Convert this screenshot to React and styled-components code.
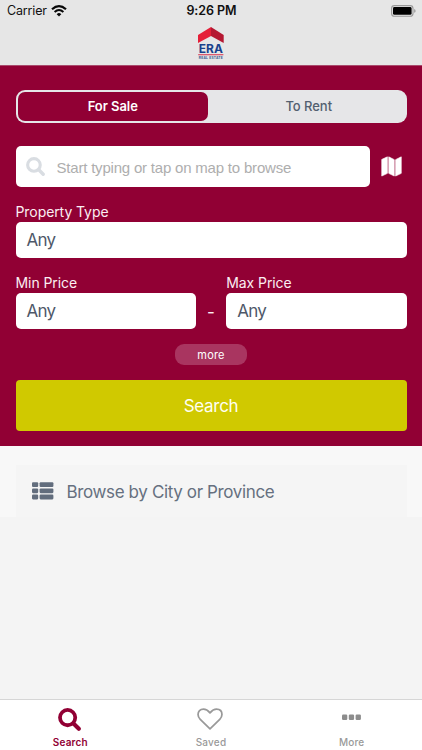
import { useState } from "react";
import styled, { createGlobalStyle } from "styled-components";

const GlobalStyle = createGlobalStyle`
  * {
    box-sizing: border-box;
  }
  body {
    margin: 0;
    font-family: Inter, "Liberation Sans", sans-serif;
  }
  button, input {
    font-family: inherit;
    border: 0;
    padding: 0;
    margin: 0;
  }
`;

const Screen = styled.div`
  display: flex;
  flex-direction: column;
  width: 422px;
  height: 750px;
  overflow: hidden;
  background: #f4f4f4;
`;

const Header = styled.header`
  height: 65px;
  flex: none;
  background: #e6e6e6;
  box-shadow: 0 1px 0 #a94a6c;
  z-index: 1;
`;

const StatusBar = styled.div`
  display: grid;
  grid-template-columns: 1fr auto 1fr;
  align-items: center;
  height: 22px;
  padding: 0 6px 0 7px;
  color: #111;
`;

const Carrier = styled.div`
  display: flex;
  align-items: center;
  gap: 4px;
  font-size: 12.5px;
  line-height: 22px;
  letter-spacing: -0.15px;
`;

const Clock = styled.div`
  font-size: 12.5px;
  font-weight: 600;
  line-height: 22px;
  letter-spacing: -0.05px;
`;

const Battery = styled.svg`
  justify-self: end;
`;

const LogoRow = styled.div`
  display: flex;
  justify-content: center;
  padding-top: 4px;
`;

const SearchPanel = styled.section`
  display: flex;
  flex-direction: column;
  flex: none;
  height: 381px;
  padding: 25px 15.5px 0;
  background: #910034;
  color: #fbeef2;
`;

const Segments = styled.div`
  display: flex;
  height: 33px;
  padding: 2px;
  border-radius: 9px;
  background: #e6e6e8;
`;

const Segment = styled.button`
  flex: ${(props) => (props.$active ? "0 0 190.5px" : "1")};
  padding-left: ${(props) => (props.$active ? 0 : 5)}px;
  padding-bottom: 2px;
  border-radius: 7px;
  background: ${(props) => (props.$active ? "#910034" : "transparent")};
  color: ${(props) => (props.$active ? "#fff" : "#535f70")};
  font-size: 13px;
  font-weight: ${(props) => (props.$active ? 600 : 500)};
  letter-spacing: -0.05px;
`;

const SearchRow = styled.div`
  display: flex;
  align-items: center;
  gap: 11px;
  margin-top: 23px;
`;

const SearchField = styled.label`
  display: flex;
  align-items: center;
  gap: 12px;
  width: 354px;
  height: 41px;
  padding-left: 10px;
  border-radius: 5px;
  background: #fff;
`;

const SearchInput = styled.input`
  flex: 1;
  min-width: 0;
  padding-top: 2px;
  background: transparent;
  outline: 0;
  font-family: "Liberation Sans", Arial, sans-serif;
  font-size: 15px;
  letter-spacing: -0.2px;
  color: #555;
  &::placeholder {
    color: #aeaeae;
    opacity: 1;
  }
`;

const Field = styled.div`
  flex: 1;
`;

const FieldLabel = styled.div`
  height: 20px;
  font-size: 14px;
  line-height: 20px;
  letter-spacing: -0.08px;
`;

const Select = styled.button`
  display: block;
  width: 100%;
  height: 36px;
  padding-left: 11px;
  border-radius: 5px;
  background: #fff;
  color: #4e5869;
  font-size: 17px;
  letter-spacing: -0.7px;
  text-align: left;
`;

const TypeRow = styled.div`
  display: flex;
  margin-top: 15px;
`;

const PriceRow = styled.div`
  display: flex;
  align-items: flex-end;
  margin-top: 15px;
`;

const Dash = styled.div`
  width: 30.5px;
  font-size: 17px;
  line-height: 34px;
  text-align: center;
`;

const MoreButton = styled.button`
  align-self: center;
  width: 71.5px;
  height: 21px;
  margin-top: 15px;
  border-radius: 9px;
  background: #a93560;
  color: #fff;
  font-size: 11px;
  letter-spacing: 0.2px;
`;

const SubmitButton = styled.button`
  height: 51px;
  margin-top: 15px;
  border-radius: 4px;
  background: #d0c900;
  color: #fffff0;
  font-size: 17px;
  letter-spacing: -0.3px;
`;

const BrowseArea = styled.div`
  flex: none;
  height: 71px;
  padding: 19px 15.5px 0;
  background: #f8f8f8;
`;

const BrowseLink = styled.button`
  display: flex;
  align-items: center;
  gap: 13px;
  width: 100%;
  height: 52px;
  padding-left: 16px;
  background: #f5f5f5;
  color: #66707f;
  font-size: 17px;
  letter-spacing: -0.37px;
`;

const BrowseText = styled.span`
  padding-top: 2px;
`;

const Filler = styled.div`
  flex: 1;
`;

const TabBar = styled.nav`
  display: grid;
  grid-template-columns: repeat(3, 1fr);
  flex: none;
  height: 51px;
  border-top: 1px solid #d6d6d6;
  background: #fff;
`;

const Tab = styled.button`
  display: flex;
  flex-direction: column;
  align-items: center;
  padding-top: 6px;
  background: transparent;
  color: ${(props) => (props.$active ? "#910034" : "#999")};
  font-size: 10px;
  font-weight: ${(props) => (props.$active ? 600 : 500)};
  letter-spacing: 0.2px;
  line-height: 14px;
`;

const TabIcon = styled.span`
  display: flex;
  align-items: center;
  justify-content: center;
  height: 26px;
  margin-bottom: 3px;
  padding-right: 1px;
`;

function WifiIcon() {
  return (
    <svg width="16" height="12" viewBox="0 0 16 12" fill="none" stroke="#080808">
      <path d="M1 4.3Q8-2 15 4.3" strokeWidth="2.2" />
      <path d="M3.6 7Q8 3 12.4 7" strokeWidth="2" />
      <path d="M5.7 9.2Q8 7 10.3 9.2L8 11.5z" fill="#080808" stroke="none" />
    </svg>
  );
}

function SearchIcon({ size, color }) {
  return (
    <svg width={size} height={size} viewBox="0 0 22 22" fill="none" stroke={color}>
      <circle cx="9.2" cy="9.2" r="7.3" strokeWidth="3.6" />
      <path d="M14.8 14.8l5.1 5.1" strokeWidth="3.9" strokeLinecap="round" />
    </svg>
  );
}

function MapIcon() {
  return (
    <svg width="21" height="21" viewBox="0 0 22 22" fill="#fff" stroke="#fff" strokeWidth=".7" strokeLinejoin="round">
      <path d="M.8 3.6L6.7.9v17.3L.8 21z" />
      <path d="M8.1.9l5.8 2.9V21l-5.8-2.8z" />
      <path d="M15.3 3.8L21.2.9v17.3L15.3 21z" />
    </svg>
  );
}

function ListIcon() {
  return (
    <svg width="22" height="18" viewBox="0 0 22 18" fill="#626d7d">
      {[0.2, 6.4, 12.6].map((y) => (
        <g key={y}>
          <rect x="0" y={y} width="6.2" height="4.8" rx="1.1" />
          <rect x="7.6" y={y} width="13.8" height="4.8" rx="1.1" />
        </g>
      ))}
    </svg>
  );
}

function HeartIcon() {
  return (
    <svg width="26" height="22" viewBox="0 0 27 23" fill="none" stroke="#999" strokeWidth="1.8" strokeLinejoin="round">
      <path d="M13.5 21.9L3.3 12C1.6 10.3 1 8.6 1 6.9 1 3.3 3.2 1.2 6.7 1.2c2.9 0 4.8 1.5 6.8 3.9 2-2.4 3.9-3.9 6.8-3.9 3.5 0 5.7 2.1 5.7 5.7 0 1.7-.6 3.4-2.3 5.1z" />
    </svg>
  );
}

function DotsIcon() {
  return (
    <svg width="19" height="26" viewBox="0 0 19 26" fill="#8c8c8c">
      <rect x="0" y="8.6" width="5.3" height="5.3" rx="1.2" />
      <rect x="6.8" y="8.6" width="5.3" height="5.3" rx="1.2" />
      <rect x="13.6" y="8.6" width="5.3" height="5.3" rx="1.2" />
    </svg>
  );
}

function Logo() {
  return (
    <svg width="28" height="34" viewBox="0 0 28 34">
      <path d="M1 9L14 1v9L1 17z" fill="#e51f38" />
      <path d="M14 1l12.7 8v8L14 10z" fill="#b51832" />
      <text x="13.8" y="26.6" textAnchor="middle" textLength="24" lengthAdjust="spacingAndGlyphs" fontFamily="Inter, sans-serif" fontSize="11.4" fontWeight="700" fill="#19418c">
        ERA
      </text>
      <path d="M1.2 28.7h25.2" stroke="#d84b61" strokeWidth="1.2" />
      <text x="13.8" y="33" textAnchor="middle" textLength="24" fontFamily="Inter, sans-serif" fontSize="3.3" fontWeight="700" fill="#37598f">
        REAL ESTATE
      </text>
    </svg>
  );
}

const tabs = [
  { label: "Search", icon: <SearchIcon size={23} color="#910034" /> },
  { label: "Saved", icon: <HeartIcon /> },
  { label: "More", icon: <DotsIcon /> },
];

export default function App() {
  const [mode, setMode] = useState("For Sale");
  const [tab, setTab] = useState("Search");
  const [query, setQuery] = useState("");

  return (
    <Screen>
      <GlobalStyle />
      <Header>
        <StatusBar>
          <Carrier>
            Carrier <WifiIcon />
          </Carrier>
          <Clock>9:26 PM</Clock>
          <Battery width="25" height="12" viewBox="0 0 25 12">
            <rect x="0.6" y="0.6" width="21.4" height="10.6" rx="2.8" fill="none" stroke="#999" strokeWidth="1.1" />
            <rect x="2" y="2" width="18.6" height="7.8" rx="1.4" />
            <path d="M23.3 4v3.8q1.2-.6 1.2-1.9t-1.2-1.9" fill="#888" />
          </Battery>
        </StatusBar>
        <LogoRow>
          <Logo />
        </LogoRow>
      </Header>
      <SearchPanel>
        <Segments>
          {["For Sale", "To Rent"].map((name) => (
            <Segment key={name} $active={name === mode} onClick={() => setMode(name)}>
              {name}
            </Segment>
          ))}
        </Segments>
        <SearchRow>
          <SearchField>
            <SearchIcon size={19} color="#d9dde2" />
            <SearchInput
              value={query}
              placeholder="Start typing or tap on map to browse"
              onChange={(evt) => setQuery(evt.target.value)}
            />
          </SearchField>
          <MapIcon />
        </SearchRow>
        <TypeRow>
          <Field>
            <FieldLabel>Property Type</FieldLabel>
            <Select>Any</Select>
          </Field>
        </TypeRow>
        <PriceRow>
          <Field>
            <FieldLabel>Min Price</FieldLabel>
            <Select>Any</Select>
          </Field>
          <Dash>-</Dash>
          <Field>
            <FieldLabel>Max Price</FieldLabel>
            <Select>Any</Select>
          </Field>
        </PriceRow>
        <MoreButton>more</MoreButton>
        <SubmitButton>Search</SubmitButton>
      </SearchPanel>
      <BrowseArea>
        <BrowseLink>
          <ListIcon />
          <BrowseText>Browse by City or Province</BrowseText>
        </BrowseLink>
      </BrowseArea>
      <Filler />
      <TabBar>
        {tabs.map(({ label, icon }) => (
          <Tab key={label} $active={label === tab} onClick={() => setTab(label)}>
            <TabIcon>{icon}</TabIcon>
            {label}
          </Tab>
        ))}
      </TabBar>
    </Screen>
  );
}
